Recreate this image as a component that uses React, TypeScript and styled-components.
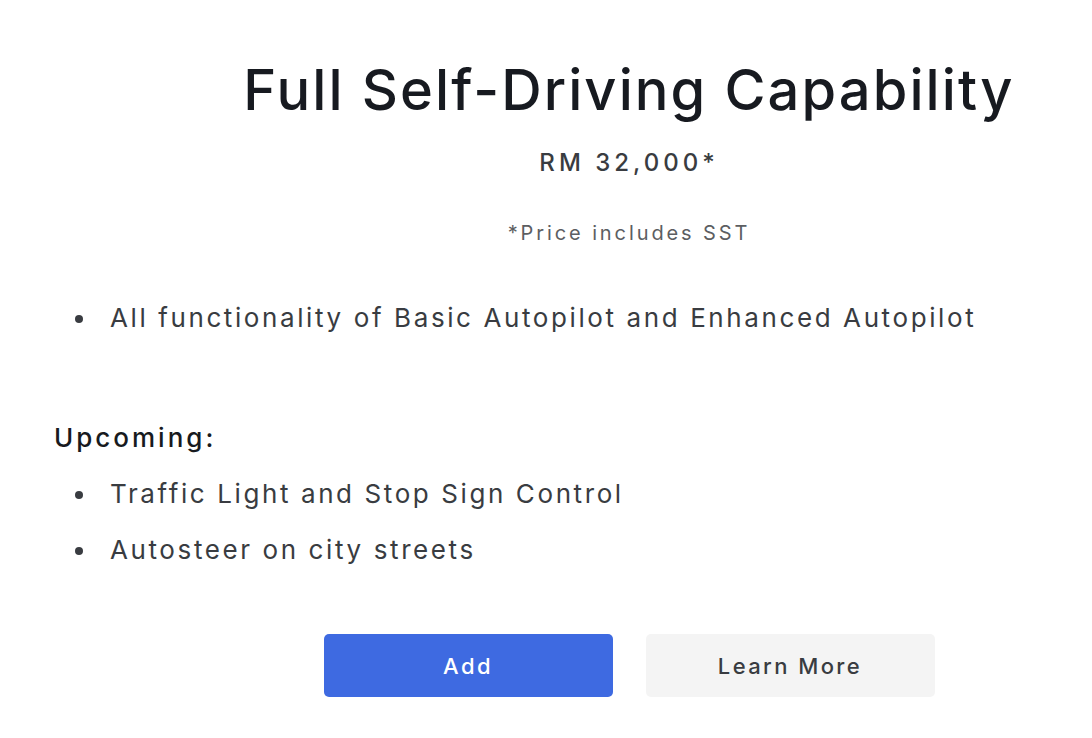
import styled, { createGlobalStyle } from "styled-components";

const GlobalStyle = createGlobalStyle`
  html, body {
    margin: 0;
    padding: 0;
    background: #ffffff;
    overflow: hidden;
  }
  body {
    font-family: Inter, "Open Sans", sans-serif;
    -webkit-font-smoothing: antialiased;
  }
`;

const features = ["All functionality of Basic Autopilot and Enhanced Autopilot"];
const upcoming = ["Traffic Light and Stop Sign Control", "Autosteer on city streets"];

export default function App() {
  return (
    <>
      <GlobalStyle />
      <Page>
        <Header>
          <Title>Full Self-Driving Capability</Title>
          <Price>RM 32,000*</Price>
          <Note>*Price includes SST</Note>
        </Header>

        <List>
          {features.map((f) => (
            <Item key={f}>{f}</Item>
          ))}
        </List>

        <Subheading>Upcoming:</Subheading>
        <List $tight>
          {upcoming.map((f) => (
            <Item key={f}>{f}</Item>
          ))}
        </List>

        <Actions>
          <Button $primary>Add</Button>
          <Button>Learn More</Button>
        </Actions>
      </Page>
    </>
  );
}

// page is wider than the window, centred column sits at x≈629
const Page = styled.div`
  width: 1150px;
  padding: 56px 0 0 54px;
  box-sizing: content-box;
`;

const Header = styled.div`
  display: flex;
  flex-direction: column;
  align-items: center;
  text-align: center;
`;

const Title = styled.h1`
  margin: 0;
  font-size: 56px;
  line-height: 68px;
  font-weight: 500;
  letter-spacing: 2.1px;
  color: #171a20;
`;

const Price = styled.div`
  margin-top: 24px;
  font-size: 24px;
  line-height: 30px;
  font-weight: 500;
  letter-spacing: 4px;
  color: #393c41;
`;

const Note = styled.div`
  margin-top: 42px;
  font-size: 20px;
  line-height: 26px;
  letter-spacing: 2.9px;
  color: #5c5e62;
`;

const List = styled.ul<{ $tight?: boolean }>`
  list-style: none;
  margin: ${(p) => (p.$tight ? "11px 0 0" : "44px 0 0")};
  padding: 0 0 0 56px;
`;

const Item = styled.li`
  position: relative;
  font-size: 26px;
  line-height: 56px;
  letter-spacing: 2.6px;
  color: #393c41;
  &::before {
    content: "";
    position: absolute;
    left: -35px;
    top: 25px;
    width: 8px;
    height: 8px;
    border-radius: 50%;
    background: #393c41;
  }
`;

const Subheading = styled.div`
  margin-top: 75px;
  font-size: 26px;
  line-height: 34px;
  font-weight: 500;
  letter-spacing: 3px;
  color: #171a20;
`;

const Actions = styled.div`
  display: flex;
  justify-content: center;
  gap: 33px;
  margin-top: 56px;
`;

const Button = styled.button<{ $primary?: boolean }>`
  width: 289px;
  height: 63px;
  border: none;
  border-radius: 5px;
  font-family: inherit;
  font-size: 22px;
  font-weight: 500;
  letter-spacing: 2.4px;
  cursor: pointer;
  background: ${(p) => (p.$primary ? "#3e6ae1" : "#f4f4f4")};
  color: ${(p) => (p.$primary ? "#ffffff" : "#393c41")};
`;
